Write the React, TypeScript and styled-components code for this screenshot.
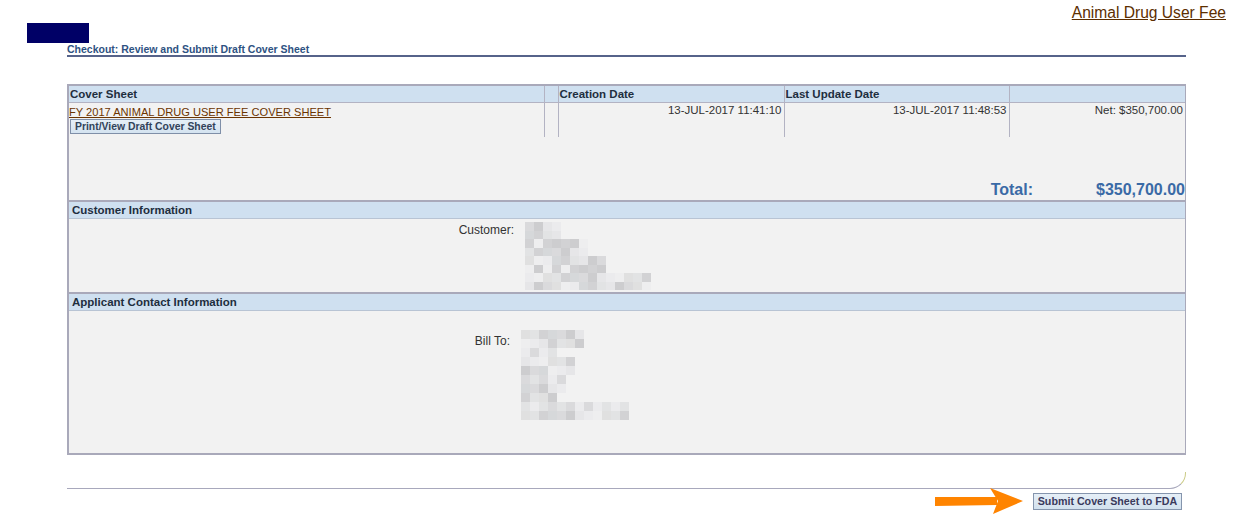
import styled, { createGlobalStyle } from 'styled-components'

const GlobalStyle = createGlobalStyle`
  body {
    margin: 0;
    background: #fff;
    font-family: "Liberation Sans", Arial, sans-serif;
    color: #333;
  }
`

const font = `"Liberation Sans", Arial, sans-serif`

const TopBar = styled.div`
  display: flex;
  justify-content: space-between;
  align-items: flex-start;
  padding: 4px 11px 0 27px;
  height: 40px;
`

const Logo = styled.div`
  width: 62px;
  height: 20px;
  margin-top: 19px;
  background: #000066;
`

const AppLink = styled.a`
  font-family: ${font};
  font-size: 15.6px;
  line-height: 18px;
  color: #5c2e00;
  text-decoration: underline;
`

const Content = styled.div`
  margin: 0 51px 0 67px;
`

const PageTitle = styled.div`
  font-family: ${font};
  font-weight: bold;
  font-size: 10.5px;
  line-height: 11px;
  color: #2e5282;
  border-bottom: 2px solid #56638a;
`

const Box = styled.div`
  margin-top: 27px;
  border: 2px solid #a9a9ba;
  border-right-width: 1px;
  background: #f2f2f2;
`

const Grid = styled.table`
  width: 100%;
  table-layout: fixed;
  border-collapse: collapse;
  font-family: ${font};
  font-size: 11.5px;
`

const Th = styled.th`
  background: #cfe0f0;
  color: #1e2e3e;
  font-weight: bold;
  text-align: left;
  height: 16px;
  padding: 0 2px 0 1px;
  border: 1px solid #b3b3c3;
  border-top: none;
  &:first-child { border-left: none; }
  &:last-child { border-right: none; }
`

const Td = styled.td<{ $right?: boolean }>`
  vertical-align: top;
  text-align: ${p => (p.$right ? 'right' : 'left')};
  height: 33px;
  padding: 1px 2px 0 0;
  border: 1px solid #b3b3c3;
  border-bottom: none;
  color: #333;
  white-space: nowrap;
  &:first-child { border-left: none; }
  &:last-child { border-right: none; }
`

const SheetLink = styled.a`
  color: #6b3400;
  text-decoration: underline;
  display: block;
  font-size: 11.1px;
  line-height: 16px;
`

const SmallButton = styled.button`
  display: block;
  font-family: ${font};
  font-weight: bold;
  font-size: 10.4px;
  color: #33435a;
  background: linear-gradient(#e6eff7, #d4e3f0);
  border: 1px solid #7f8fa8;
  padding: 0 4px;
  height: 15px;
  line-height: 12px;
  margin: -1px 0 0 1px;
`

const TotalRow = styled.div`
  display: flex;
  justify-content: flex-end;
  align-items: flex-end;
  height: 65px;
  font-family: ${font};
  font-weight: bold;
  font-size: 16px;
  color: #3a6aa6;
  padding-bottom: 1px;
  box-sizing: border-box;
  border-bottom: 2px solid #a9a9ba;
`

const TotalLabel = styled.span`
  margin-right: 63px;
`

const SectionHeader = styled.div`
  background: #cfe0f0;
  font-family: ${font};
  font-weight: bold;
  font-size: 11.5px;
  color: #1e2e3e;
  height: 16px;
  line-height: 17px;
  padding-left: 3px;
  border-bottom: 1px solid #b8c4d4;
`

const SectionBody = styled.div<{ $h: number; $pad: number }>`
  display: flex;
  height: ${p => p.$h}px;
  padding-top: ${p => p.$pad}px;
  box-sizing: border-box;
  overflow: hidden;
`

const Divider = styled.div`
  height: 2px;
  background: #a9a9ba;
`

const FieldLabel = styled.div<{ $w: number }>`
  width: ${p => p.$w}px;
  text-align: right;
  font-family: ${font};
  font-size: 12px;
  line-height: 14px;
  color: #333;
  padding-top: 4px;
  flex-shrink: 0;
`

const Blur = styled.div<{ $ml: number; $mt: number }>`
  margin-left: ${p => p.$ml}px;
  margin-top: ${p => p.$mt}px;
  display: flex;
  flex-direction: column;
`

const BlurRow = styled.div`
  display: flex;
`

const Pixel = styled.div<{ $h: number }>`
  width: 9px;
  height: ${p => p.$h}px;
`

const Footer = styled.div`
  height: 16px;
  margin-top: 17px;
  border-bottom: 1px solid #a8a8bc;
  border-right: 1px solid #cccc88;
  border-bottom-right-radius: 16px;
`

const Actions = styled.div`
  display: flex;
  justify-content: flex-end;
  align-items: center;
  gap: 8px;
  margin-top: -2px;
  padding-right: 4px;
`

const SubmitButton = styled.button`
  font-family: ${font};
  font-weight: bold;
  font-size: 10.7px;
  color: #3a3a5c;
  background: linear-gradient(#e6eff7, #d2e1ee);
  border: 1px solid #8595ad;
  height: 17px;
  width: 149px;
  padding: 0;
  line-height: 13px;
`

const shades = ['#e6e6e8', '#dadadc', '#d2d2d4', '#e0e0e0', '#ebebed', '#cdcdcf', '#d6d8da', '#e2e3e4', '#eeeeef']

const pixelBlock = (widths: number[], seed: number, h: number) =>
  widths.map((w, r) => (
    <BlurRow key={r}>
      {Array.from({ length: w }).map((_, c) => (
        <Pixel key={c} $h={h} style={{ background: shades[(r * 5 + c * 4 + seed + ((r * c) % 3)) % shades.length] }} />
      ))}
    </BlurRow>
  ))

const Arrow = () => (
  <svg width="90" height="28" viewBox="0 0 90 28">
    <path d="M0 10 L62 10 L62 18 L0 19 Z" fill="#ff8400" />
    <path d="M55 1 L88 14 L58 27 L63 14 Z" fill="#ff8400" />
  </svg>
)

export default function App() {
  return (
    <>
      <GlobalStyle />
      <TopBar>
        <Logo />
        <AppLink href="#">Animal Drug User Fee</AppLink>
      </TopBar>
      <Content>
        <PageTitle>Checkout: Review and Submit Draft Cover Sheet</PageTitle>
        <Box>
          <Grid>
            <colgroup>
              <col style={{ width: 475 }} />
              <col style={{ width: 14 }} />
              <col style={{ width: 226 }} />
              <col style={{ width: 225 }} />
              <col />
            </colgroup>
            <thead>
              <tr>
                <Th>Cover Sheet</Th>
                <Th></Th>
                <Th>Creation Date</Th>
                <Th>Last Update Date</Th>
                <Th></Th>
              </tr>
            </thead>
            <tbody>
              <tr>
                <Td>
                  <SheetLink href="#">FY 2017 ANIMAL DRUG USER FEE COVER SHEET</SheetLink>
                  <SmallButton>Print/View Draft Cover Sheet</SmallButton>
                </Td>
                <Td></Td>
                <Td $right>13-JUL-2017 11:41:10</Td>
                <Td $right>13-JUL-2017 11:48:53</Td>
                <Td $right>Net: $350,700.00</Td>
              </tr>
            </tbody>
          </Grid>
          <TotalRow>
            <TotalLabel>Total:</TotalLabel>
            <span>$350,700.00</span>
          </TotalRow>
          <SectionHeader>Customer Information</SectionHeader>
          <SectionBody $h={73} $pad={0}>
            <FieldLabel $w={445}>Customer:</FieldLabel>
            <Blur $ml={11} $mt={3}>{pixelBlock([4, 4, 7, 7, 9, 9, 14, 14], 1, 8.5)}</Blur>
          </SectionBody>
          <Divider />
          <SectionHeader>Applicant Contact Information</SectionHeader>
          <SectionBody $h={142} $pad={19}>
            <FieldLabel $w={441}>Bill To:</FieldLabel>
            <Blur $ml={11} $mt={0}>{pixelBlock([7, 7, 4, 6, 6, 5, 5, 4, 12, 12], 3, 9)}</Blur>
          </SectionBody>
        </Box>
        <Footer />
        <Actions>
          <Arrow />
          <SubmitButton>Submit Cover Sheet to FDA</SubmitButton>
        </Actions>
      </Content>
    </>
  )
}
